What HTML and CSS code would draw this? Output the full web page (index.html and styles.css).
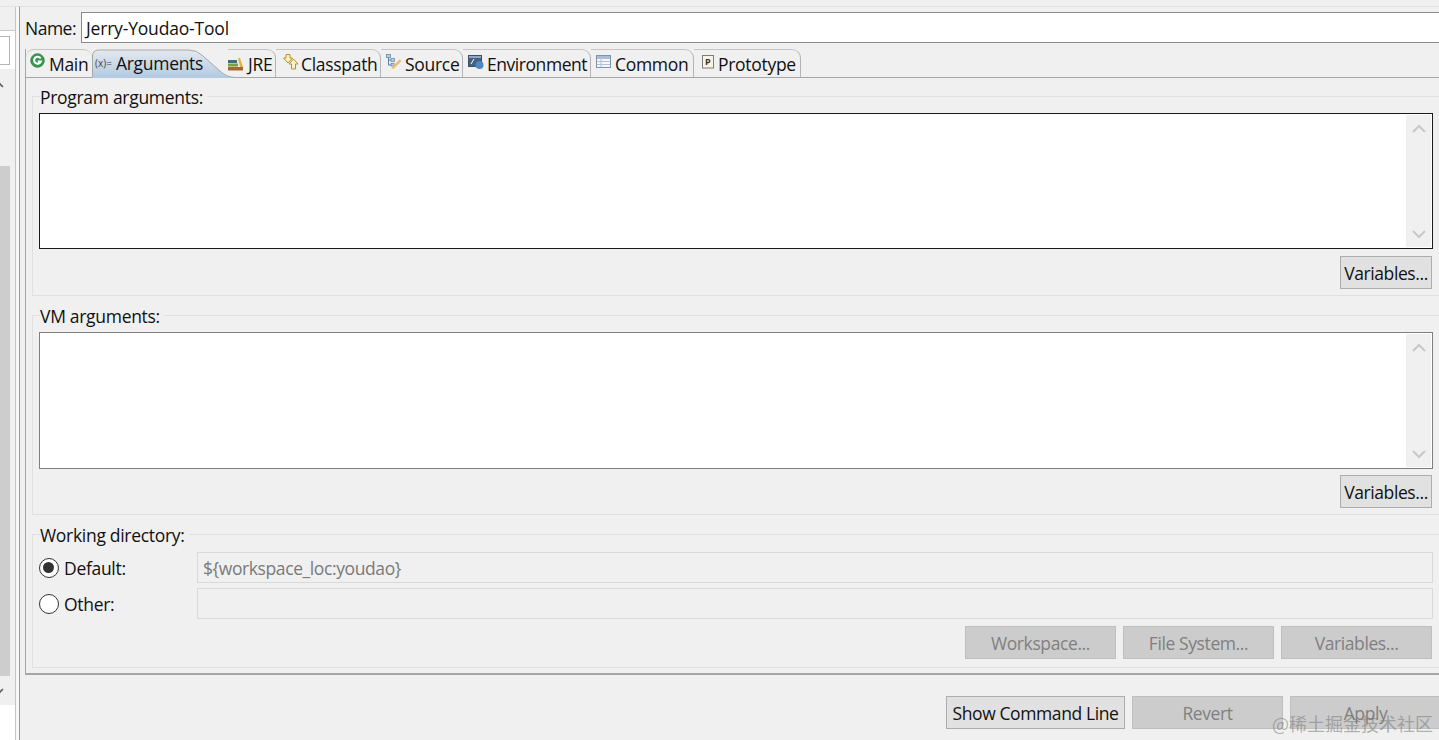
FILE: index.html
```html
<!DOCTYPE html>
<html lang="en">
<head>
<meta charset="utf-8">
<title>Run Configurations</title>
<link rel="stylesheet" href="styles.css">
</head>
<body>
<div class="window">
  <aside class="side">
    <div class="side-head"></div>
    <div class="side-band"><div class="side-filter"></div></div>
    <div class="side-scroll">
      <div class="scroll-up"><svg width="10" height="10" viewBox="0 0 10 10"><path d="M0 6 L3 3 L6 6" fill="none" stroke="#606060" stroke-width="1.6"/></svg></div>
      <div class="scroll-thumb"></div>
      <div class="scroll-down"><svg width="10" height="10" viewBox="0 0 10 10"><path d="M0 3 L3 6 L6 3" fill="none" stroke="#606060" stroke-width="1.6"/></svg></div>
    </div>
    <div class="side-foot"></div>
  </aside>
  <main class="main">
    <div class="name-row">
      <label class="name-label">Name:</label>
      <div class="name-input">Jerry-Youdao-Tool</div>
    </div>
    <div class="folder">
      <div class="tabs">
        <div class="tab tab-main">
          <svg class="ico" width="16" height="16" viewBox="0 0 16 16"><circle cx="7.5" cy="7.5" r="6.8" fill="#35974f" stroke="#2c7f43" stroke-width="0.8"/><path d="M10.6 5.4A3.5 3.5 0 1 0 10.9 8.4H7.8" fill="none" stroke="#fff" stroke-width="2"/></svg>
          <span>Main</span>
        </div>
        <div class="tab tab-args">
          <svg class="tab-shape" width="146" height="29" viewBox="0 0 146 29"><defs><linearGradient id="g" x1="0" y1="0" x2="0" y2="1"><stop offset="0" stop-color="#e4e9f0"/><stop offset="1" stop-color="#b2c9e1"/></linearGradient></defs><path d="M0.5 29V7Q0.500 1 7 1H97Q105 1 111 7L128 22Q134 28 143 28.500V29Z" fill="url(#g)"/><path d="M0.500 28V7Q0.500 1 7 1H97Q105 1 111 7L128 22Q134 28 143 28.500" fill="none" stroke="#a8a8a8"/></svg>
          <span class="vars">(x)=</span>
          <span class="args-text">Arguments</span>
        </div>
        <div class="tab tab-jre">
          <svg class="ico" width="16" height="14" viewBox="0 0 16 14"><rect x="0" y="3" width="9" height="3" fill="#3d6f7d"/><rect x="0" y="6.500" width="10" height="3" fill="#7a9f3f"/><rect x="0" y="10" width="15" height="3.500" fill="#a56a33"/><path d="M10 1 L12 1 L15 10 L12 10Z" fill="#e3b13c"/></svg>
          <span>JRE</span>
        </div>
        <div class="tab tab-cp">
          <svg class="ico ico-up" width="16" height="16" viewBox="0 0 16 16"><path d="M3 0.500H7V4H9.500L5 9L0.500 4H3Z" fill="#fdf0c2" stroke="#b8902a"/><path d="M10.500 5L15 10H12.500V15H8.500V10H6Z" fill="#fdf0c2" stroke="#b8902a"/></svg>
          <span>Classpath</span>
        </div>
        <div class="tab tab-src">
          <svg class="ico ico-up" width="16" height="16" viewBox="0 0 16 16"><path d="M2.500 1V11H5M2.500 6H5" fill="none" stroke="#5b7f9e"/><rect x="0.500" y="0.500" width="4" height="3" fill="#b9d0e4" stroke="#5b7f9e" stroke-width="0.700"/><rect x="5" y="4.500" width="3.500" height="3" fill="#b9d0e4" stroke="#5b7f9e" stroke-width="0.700"/><rect x="5" y="9.500" width="3" height="2.500" fill="#b9d0e4" stroke="#5b7f9e" stroke-width="0.700"/><path d="M5.500 15L8 14.500L15.500 7L13.500 5.500L6.500 12.500Z" fill="#e8bd6e"/></svg>
          <span>Source</span>
        </div>
        <div class="tab tab-env">
          <svg class="ico ico-up" width="16" height="15" viewBox="0 0 16 15"><rect x="0.500" y="0.500" width="13" height="11" fill="#46607f" stroke="#3a4f6a"/><rect x="1" y="1" width="12" height="2" fill="#8fa9c4"/><path d="M3 9L6 4" stroke="#fff"/><circle cx="11.500" cy="10" r="4" fill="#4f86c4"/></svg>
          <span class="env-text">Environment</span>
        </div>
        <div class="tab tab-common">
          <svg class="ico ico-up" width="16" height="14" viewBox="0 0 16 14"><rect x="0.500" y="0.500" width="14" height="12" fill="#f3f6fa" stroke="#7f93aa"/><path d="M1 3.500H14M1 6.500H14M1 9.500H14M5 3.500V12" stroke="#b3c2d3" fill="none"/><rect x="1" y="1" width="13" height="2" fill="#a9bdd3"/></svg>
          <span>Common</span>
        </div>
        <div class="tab tab-proto">
          <svg class="ico ico-up" width="12" height="14" viewBox="0 0 12 14"><rect x="0.500" y="0.500" width="11" height="12.500" fill="#f7f4e4" stroke="#7d7d7d"/><text x="3" y="10" class="p-glyph">P</text></svg>
          <span>Prototype</span>
        </div>
      </div>
      <div class="panel">
        <section class="group group-args">
          <div class="legend">Program arguments:</div>
          <div class="area area-focus">
            <div class="vbar">
              <svg width="14" height="10" viewBox="0 0 14 10"><path d="M1 8L7 2L13 8" fill="none" stroke="#c8c8c8" stroke-width="2"/></svg>
              <svg width="14" height="10" viewBox="0 0 14 10"><path d="M1 2L7 8L13 2" fill="none" stroke="#c8c8c8" stroke-width="2"/></svg>
            </div>
          </div>
          <div class="btn-row btn-row-first"><button class="btn btn-vars">Variables...</button></div>
        </section>
        <section class="group group-args">
          <div class="legend">VM arguments:</div>
          <div class="area">
            <div class="vbar">
              <svg width="14" height="10" viewBox="0 0 14 10"><path d="M1 8L7 2L13 8" fill="none" stroke="#c8c8c8" stroke-width="2"/></svg>
              <svg width="14" height="10" viewBox="0 0 14 10"><path d="M1 2L7 8L13 2" fill="none" stroke="#c8c8c8" stroke-width="2"/></svg>
            </div>
          </div>
          <div class="btn-row"><button class="btn btn-vars">Variables...</button></div>
        </section>
        <section class="group group-dir">
          <div class="legend">Working directory:</div>
          <div class="dir-row">
            <span class="radio radio-on"></span>
            <span class="dir-label">Default:</span>
            <div class="dir-input">${workspace_loc:youdao}</div>
          </div>
          <div class="dir-row">
            <span class="radio"></span>
            <span class="dir-label">Other:</span>
            <div class="dir-input"></div>
          </div>
          <div class="btn-row btn-row-dir">
            <button class="btn btn-off">Workspace...</button>
            <button class="btn btn-off">File System...</button>
            <button class="btn btn-off">Variables...</button>
          </div>
        </section>
      </div>
    </div>
    <div class="footer">
      <button class="btn btn-cmd">Show Command Line</button>
      <button class="btn btn-off">Revert</button>
      <button class="btn btn-off">Apply</button>
      <div class="watermark">@稀土掘金技术社区</div>
    </div>
  </main>
</div>
</body>
</html>
```
FILE: styles.css
```css
* { box-sizing: border-box; }
html, body { margin: 0; padding: 0; height: 100%; overflow: hidden; }
body { background: #f0f0f0; color: #111; font-family: "Open Sans", "Noto Sans", sans-serif; font-size: 17.5px; letter-spacing: -0.3px; }
.window { display: flex; height: 740px; width: 1439px; overflow: hidden; padding-top: 6px; }
.side { width: 20px; flex: none; display: flex; flex-direction: column; border-right: 1px solid #999; border-top: 1px solid #e2e2e2; background: #f7f7f7; }
.side-head { height: 24px; width: 16px; flex: none; background: #f0f0f0; border-bottom: 1px solid #c8c8c8; border-right: 1px solid #c4c4c4; }
.side-band { height: 38px; width: 16px; flex: none; background: #fff; padding-top: 5px; border-right: 1px solid #c4c4c4; }
.side-filter { width: 10px; height: 29px; background: #fff; border: 1px solid #b5b5b5; border-left: 0; }
.side-scroll { width: 16px; height: 636px; flex: none; display: flex; flex-direction: column; border-right: 1px solid #c4c4c4; background: #f0f0f0; }
.scroll-up { height: 97px; padding-top: 12px; overflow: hidden; }
.scroll-thumb { width: 10px; height: 510px; background: #cdcdcd; }
.scroll-down { height: 29px; padding-top: 10px; overflow: hidden; }
.scroll-up svg, .scroll-down svg { margin-left: -3px; display: block; }
.side-foot { flex: 1; width: 16px; background: #fff; border-right: 1px solid #c4c4c4; }

.main { flex: 1; min-width: 0; padding: 5px 0 0 5px; border-top: 1px solid #e2e2e2; }
.name-row { display: flex; align-items: center; height: 31px; margin-bottom: 6px; }
.name-label { width: 56px; flex: none; letter-spacing: -0.5px; }
.name-input { flex: 1; height: 31px; margin-right: -6px; background: #fff; border: 1px solid #8a8a8a; padding: 1px 4px; line-height: 28px; letter-spacing: -0.18px; }

.folder { margin-right: -6px; height: 626px; border-left: 1px solid #a6a6a6; border-bottom: 2px solid #a6a6a6; }
.tabs { display: flex; height: 29px; border-bottom: 1px solid #a6a6a6; align-items: stretch; }
.tab { display: flex; align-items: center; height: 28px; position: relative; border-top: 1px solid #c4c4c4; border-right: 1px solid #b4b4b4; border-top-right-radius: 9px; flex: none; }
.tab .ico { flex: none; }
.tab .ico-up { margin-top: -3px; }
.tab-main { width: 66px; padding-left: 4px; gap: 3px; border: 0; border-top: 1px solid #c4c4c4; border-top-left-radius: 8px; }
.tab-main .ico { margin-top: -5px; }
.tab-args { width: 136px; border: 0; padding-left: 3px; z-index: 1; }
.tab-shape { position: absolute; left: 0; top: 0; }
.vars { position: relative; font-size: 10px; width: 21px; letter-spacing: 0; color: #444; margin-top: -1px; }
.args-text { position: relative; }
.tab-jre { width: 48px; padding-left: 0; gap: 4px; z-index: 2; background: transparent; }
.tab-cp { width: 105px; padding-left: 7px; gap: 2px; }
.tab-src { width: 82px; padding-left: 5px; gap: 3px; }
.tab-env { width: 128px; padding-left: 5px; gap: 3px; }
.env-text { letter-spacing: -0.45px; }
.tab-common { width: 103px; padding-left: 5px; gap: 3px; }
.tab-proto { width: 107px; padding-left: 8px; gap: 4px; }
.p-glyph { font-size: 9px; font-weight: 700; fill: #333; letter-spacing: 0; }

.panel { padding: 18px 6px 0 6px; }
.group { border: 1px solid #e0e0e0; border-right: 0; position: relative; }
.group-args { height: 200px; margin-bottom: 19px; padding: 16px 6px 0 6px; }
.group-dir { height: 134px; padding: 17px 6px 0 6px; }
.legend { position: absolute; left: 7px; top: -10px; background: #f0f0f0; padding-right: 4px; line-height: 20px; }
.area { height: 137px; background: #fff; border: 1px solid #7e7e7e; display: flex; justify-content: flex-end; padding: 1px; }
.area-focus { height: 136px; border-color: #1a1a1a; }
.vbar { width: 25px; background: #f0f0f0; display: flex; flex-direction: column; justify-content: space-between; align-items: center; padding: 9px 0 8px; }
.btn-row { display: flex; justify-content: flex-end; padding-top: 6px; margin-right: 1px; }
.btn-row-first { padding-top: 7px; }
.btn { font: inherit; letter-spacing: -0.4px; height: 33px; padding: 0; margin: 0; background: #e1e1e1; border: 1px solid #adadad; color: #111; }
.btn-vars { width: 92px; height: 33px; }
.btn-off { width: 151px; background: #cccccc; border-color: #bfbfbf; color: #808080; }
.btn-cmd { width: 179px; }
.dir-row { display: flex; align-items: center; height: 31px; margin-bottom: 5px; }
.radio { width: 20px; height: 20px; border-radius: 50%; border: 1.500px solid #333; background: #fff; flex: none; margin-right: 5px; position: relative; }
.radio-on::after { content: ""; position: absolute; left: 3px; top: 3px; width: 11px; height: 11px; border-radius: 50%; background: #333; }
.dir-label { width: 133px; flex: none; }
.dir-input { flex: 1; height: 31px; border: 1px solid #d9d9d9; background: #f0f0f0; color: #7a7a7a; padding-left: 5px; line-height: 30px; letter-spacing: -0.4px; }
.btn-row-dir { gap: 7px; padding-top: 2px; }

.footer { display: flex; justify-content: flex-end; gap: 7px; padding-top: 21px; margin-right: -2px; position: relative; }
.footer .btn-off { flex: none; }
.watermark { position: absolute; right: 8px; top: 36px; font-family: "Noto Sans CJK SC", "Open Sans", sans-serif; font-size: 18px; letter-spacing: 0; color: rgba(120,120,120,0.55); white-space: nowrap; line-height: 24px; }
```
